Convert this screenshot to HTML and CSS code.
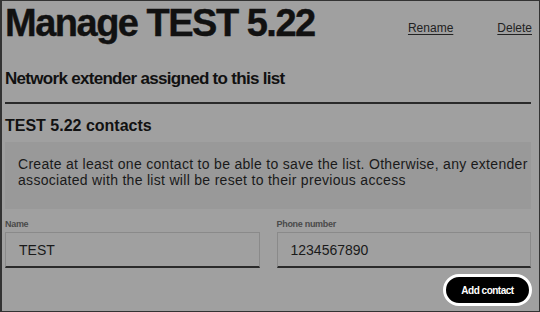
FILE: index.html
```html
<!DOCTYPE html>
<html>
<head>
<meta charset="utf-8">
<link rel="stylesheet" href="styles.css">
</head>
<body>
<div class="frame">
  <header class="head">
    <h1 class="title">Manage TEST 5.22</h1>
    <div class="actions">
      <a class="link">Rename</a>
      <a class="link">Delete</a>
    </div>
  </header>
  <h2 class="sub sub-first">Network extender assigned to this list</h2>
  <div class="rule"></div>
  <h2 class="sub sub-second">TEST 5.22 contacts</h2>
  <div class="notice">Create at least one contact to be able to save the list. Otherwise, any extender associated with the list will be reset to their previous access</div>
  <div class="fields">
    <div class="field">
      <div class="label">Name</div>
      <div class="input">TEST</div>
    </div>
    <div class="field">
      <div class="label">Phone number</div>
      <div class="input">1234567890</div>
    </div>
  </div>
  <div class="btnrow">
    <button class="btn">Add contact</button>
  </div>
</div>
</body>
</html>
```
FILE: styles.css
```css
* { box-sizing: border-box; }
html, body { margin: 0; padding: 0; }
body {
  width: 540px;
  height: 312px;
  background: #a0a0a0;
  font-family: "Liberation Sans", Arial, sans-serif;
  color: #111;
  overflow: hidden;
}
.frame {
  width: 540px;
  height: 312px;
  border: 1px solid #333;
  border-left-width: 2px;
  padding: 0 8px 0 3px;
  display: flex;
  flex-direction: column;
}
.head {
  display: flex;
  align-items: flex-start;
  justify-content: space-between;
  height: 50px;
  flex: none;
}
.title {
  margin: 0;
  font-size: 38px;
  font-weight: bold;
  letter-spacing: -1.5px;
  line-height: 44px;
  -webkit-text-stroke: 0.4px #111;
}
.actions {
  display: flex;
  gap: 44px;
  padding-top: 20px;
  margin-right: -1px;
}
.link {
  font-size: 12px;
  color: #222;
  text-decoration: underline;
  text-underline-offset: 2px;
}
.sub {
  margin: 0;
  font-size: 17px;
  font-weight: bold;
  letter-spacing: -0.7px;
  line-height: 20px;
  flex: none;
}
.sub-first { margin-top: 18px; }
.rule {
  height: 2px;
  background: #2a2a2a;
  margin-top: 13px;
  flex: none;
}
.sub-second {
  font-size: 16px;
  letter-spacing: 0;
  margin-top: 12px;
}
.notice {
  margin-top: 6px;
  background: #999;
  height: 67px;
  flex: none;
  padding: 14px 2px 0 13px;
  font-size: 14px;
  letter-spacing: 0.3px;
  line-height: 16px;
  color: #1a1a1a;
}
.fields {
  display: flex;
  gap: 17px;
  margin-top: 10px;
  flex: none;
}
.field { flex: 1; }
.label {
  font-size: 9px;
  font-weight: bold;
  color: #4a4a4a;
  letter-spacing: -0.3px;
  line-height: 11px;
  margin-bottom: 2px;
}
.input {
  height: 36px;
  border: 1px solid #8a8a8a;
  border-bottom: 2px solid #2a2a2a;
  padding: 0 13px;
  font-size: 14px;
  line-height: 34px;
  color: #1a1a1a;
}
.btnrow {
  display: flex;
  justify-content: flex-end;
  margin-top: 6px;
  margin-right: -1px;
  flex: none;
}
.btn {
  font-family: inherit;
  background: #000;
  color: #fff;
  font-weight: bold;
  font-size: 10px;
  border: 3px solid #fff;
  border-radius: 16px;
  width: 89px;
  height: 32px;
  padding: 0;
  letter-spacing: -0.5px;
}
```
